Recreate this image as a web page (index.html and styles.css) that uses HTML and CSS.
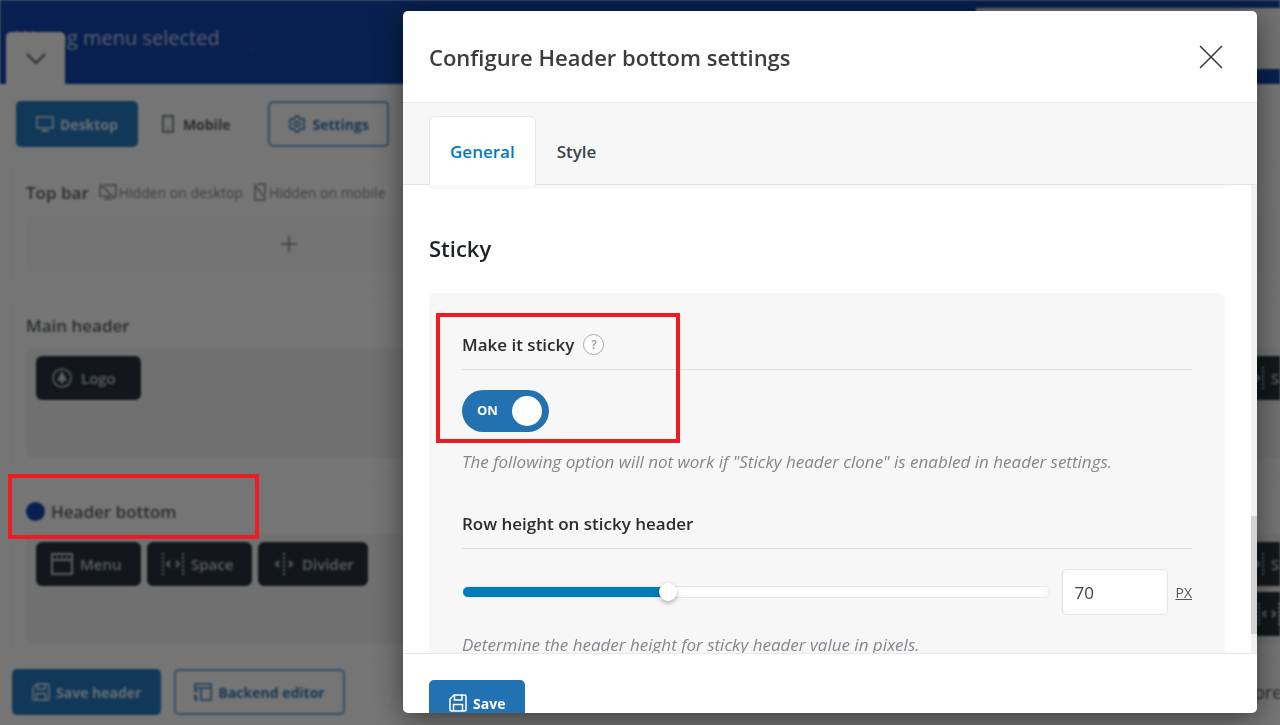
FILE: index.html
```
<!DOCTYPE html>
<html lang="en">
<head>
    <meta charset="UTF-8">
    <meta name="viewport" content="width=device-width, initial-scale=1.0">
    <title>Header builder</title>
    <link rel="stylesheet" href="styles.css">
</head>
<body>
    <!-- shared icons -->
    <svg class="sprite" aria-hidden="true">
        <symbol id="i-save" viewBox="0 0 18 18">
            <path d="M5 1h10.500a1.500 1.500 0 0 1 1.500 1.500v13a1.500 1.500 0 0 1-1.500 1.500h-13A1.500 1.500 0 0 1 1 15.500V5zM5.500 1v5h7.500V1M4.500 17v-6.500h9V17"/>
        </symbol>
        <symbol id="i-space" viewBox="0 0 24 24">
            <path d="M2 1v22M22 1v22" stroke-width="2" stroke-dasharray="2 2"/>
            <path d="M9 9l-3 3 3 3M15 9l3 3-3 3" stroke-width="2"/>
        </symbol>
        <symbol id="i-divider" viewBox="0 0 24 24">
            <path d="M12 1v22" stroke-width="2" stroke-dasharray="2 2"/>
            <path d="M7 9l-3 3 3 3M17 9l3 3-3 3" stroke-width="2"/>
        </symbol>
    </svg>

    <div class="page">
        <header class="site-header">
            <span class="menu-note">Wrong menu selected</span>
            <span class="search-block"></span>
            <button type="button" class="collapse" aria-label="Collapse">
                <svg width="20" height="12" viewBox="0 0 20 12"><path d="M1 1l9 9 9-9"/></svg>
            </button>
        </header>

        <main class="builder">
            <div class="toolbar">
                <div class="switcher">
                    <button type="button" class="btn btn-primary">
                        <svg width="18" height="18" viewBox="0 0 18 18"><path d="M1 2h16v11H1zM9 13v3M5 16h8"/></svg>
                        Desktop
                    </button>
                    <button type="button" class="btn btn-plain">
                        <svg width="18" height="18" viewBox="0 0 18 18"><path d="M4 1h10v16H4zM8 14h2"/></svg>
                        Mobile
                    </button>
                </div>
                <button type="button" class="btn btn-outline">
                    <svg width="18" height="18" viewBox="0 0 18 18"><path d="M7.500 1h3l.7 2.500 1.500.9 2.600-.7 1.500 2.600L15 8.200v1.600l1.800 1.900-1.500 2.600-2.600-.7-1.500.9-.7 2.500h-3l-.7-2.500-1.500-.9-2.600.7-1.500-2.600L3 9.800V8.200L1.200 6.300l1.500-2.600 2.600.7 1.500-.9z"/><circle cx="9" cy="9" r="2.500"/></svg>
                    Settings
                </button>
            </div>

            <section class="panel">
                <div class="panel-head">
                    <h2>Top bar</h2>
                    <span class="hint">
                        <svg width="18" height="18" viewBox="0 0 18 18"><path d="M5 2h12v11h-2M1 3v10h10M5 16h8M9 13v3M1 1l15 15"/></svg>
                        Hidden on desktop
                    </span>
                    <span class="hint">
                        <svg width="14" height="18" viewBox="0 0 14 18"><path d="M4 1h8v10M2 4v13h10M1 1l12 15"/></svg>
                        Hidden on mobile
                    </span>
                </div>
                <div class="drop drop-empty">
                    <button type="button" class="add" aria-label="Add element">
                        <svg width="16" height="16" viewBox="0 0 16 16"><path d="M8 0v16M0 8h16"/></svg>
                    </button>
                </div>
            </section>

            <section class="panel">
                <div class="panel-head">
                    <h2>Main header</h2>
                </div>
                <div class="drop">
                    <div class="chips">
                        <button type="button" class="chip chip-logo">
                            <svg width="20" height="20" viewBox="0 0 20 20"><circle cx="10" cy="10" r="9"/><path class="solid" d="M10 3l5 10H5zM9 13h2v3H9z"/></svg>
                            Logo
                        </button>
                    </div>
                    <div class="chips chips-end">
                        <button type="button" class="chip"><svg width="24" height="24"><use href="#i-space"/></svg>Space</button>
                    </div>
                </div>
            </section>

            <section class="panel">
                <div class="panel-head">
                    <span class="dot"></span>
                    <h2>Header bottom</h2>
                </div>
                <div class="drop">
                    <div class="chips">
                        <button type="button" class="chip">
                            <svg width="24" height="24" viewBox="0 0 24 24"><path d="M2 2h20v20H2zM2 8h20M6 5h2M11 5h2M16 5h2" stroke-width="2"/></svg>
                            Menu
                        </button>
                        <button type="button" class="chip"><svg width="24" height="24"><use href="#i-space"/></svg>Space</button>
                        <button type="button" class="chip"><svg width="24" height="24"><use href="#i-divider"/></svg>Divider</button>
                    </div>
                    <div class="chips chips-end">
                        <button type="button" class="chip"><svg width="24" height="24"><use href="#i-space"/></svg>Space</button>
                        <button type="button" class="chip chip-inset"><svg width="24" height="24"><use href="#i-space"/></svg>Space</button>
                    </div>
                </div>
            </section>

            <div class="actions">
                <button type="button" class="btn btn-primary">
                    <svg width="18" height="18"><use href="#i-save"/></svg>
                    Save header
                </button>
                <button type="button" class="btn btn-outline">
                    <svg width="18" height="18" viewBox="0 0 18 18"><path d="M1 1h16v4H1zM7 5v12h10V5M1 5v3h3M1 11v6h3M1 14h3"/></svg>
                    Backend editor
                </button>
                <a href="#" class="presets">presets</a>
            </div>
        </main>
    </div>

    <div class="overlay">
        <div class="modal" role="dialog" aria-labelledby="modal-title">
            <div class="modal-header">
                <h1 id="modal-title">Configure Header bottom settings</h1>
                <button type="button" class="close" aria-label="Close">
                    <svg width="24" height="24" viewBox="0 0 24 24"><path d="M1 1l22 22M23 1L1 23"/></svg>
                </button>
            </div>

            <div class="tabs">
                <button type="button" class="tab active">General</button>
                <button type="button" class="tab">Style</button>
            </div>

            <div class="modal-body">
                <div class="modal-content">
                    <div class="card card-end"></div>
                    <h2>Sticky</h2>
                    <div class="card">
                        <div class="field">
                            <div class="field-title">
                                <label for="sticky">Make it sticky</label>
                                <button type="button" class="help" aria-label="Help">?</button>
                            </div>
                            <div class="toggle">
                                <input type="checkbox" id="sticky" checked>
                                <span class="toggle-text">ON</span>
                            </div>
                            <p>The following option will not work if "Sticky header clone" is enabled in header settings.</p>
                            <div class="marker marker-field"></div>
                        </div>
                        <div class="field">
                            <div class="field-title">
                                <label for="height">Row height on sticky header</label>
                            </div>
                            <div class="slider-row">
                                <input type="range" class="slider" min="0" max="200" value="69" aria-label="Row height">
                                <input type="text" class="number" id="height" value="70">
                                <a href="#" class="unit">PX</a>
                            </div>
                            <p>Determine the header height for sticky header value in pixels.</p>
                        </div>
                    </div>
                </div>
                <div class="scrollbar"><div class="scroll-thumb"></div></div>
            </div>

            <div class="modal-footer">
                <button type="button" class="btn btn-primary">
                    <svg width="18" height="18"><use href="#i-save"/></svg>
                    Save
                </button>
            </div>
        </div>
    </div>
    <div class="marker marker-row"></div>
</body>
</html>
```
FILE: styles.css
```
* {
    box-sizing: border-box;
}
body {
    margin: 0;
    height: 100vh;
    overflow: hidden;
    font-family: "Open Sans", "Noto Sans", sans-serif;
    font-size: 16px;
    color: #2c3338;
    background: #ebebeb;
}
h1, h2, p {
    margin: 0;
}
button, input {
    font-family: inherit;
}
button {
    cursor: pointer;
}
svg {
    flex: none;
    fill: none;
    stroke: currentColor;
    stroke-width: 1.5;
}
.sprite {
    position: absolute;
    width: 0;
    height: 0;
}

/* page behind the dialog */
.page {
    height: 100vh;
    overflow: hidden;
    background: #ebebeb;
    filter: blur(1px);
}
.site-header {
    position: relative;
    display: flex;
    justify-content: space-between;
    height: 84px;
    padding: 8px 0 15px 16px;
    background: #10409e;
}
.menu-note {
    align-self: flex-start;
    margin-top: 16px;
    padding-right: 32px;
    border-right: 1px solid #2b55a8;
    font-size: 20px;
    line-height: 28px;
    color: #b4c0dc;
}
.search-block {
    width: 304px;
    background: #e4e4e4;
}
.collapse {
    position: absolute;
    left: 6px;
    bottom: 0;
    width: 59px;
    height: 52px;
    padding: 4px 0 0;
    border: 0;
    border-radius: 5px 5px 0 0;
    background: #ebebeb;
    color: #50575e;
}
.collapse svg {
    stroke-width: 2;
}
.builder {
    display: flex;
    flex-direction: column;
    width: calc(100% + 76px);
    padding: 13px 0 0 12px;
}
.toolbar {
    display: flex;
    align-items: center;
    gap: 13px;
    margin-bottom: 13px;
}
.switcher {
    display: flex;
    padding: 3px;
    border: 1px solid #e4e4e4;
    border-radius: 5px;
}
.btn {
    display: inline-flex;
    align-items: center;
    gap: 6px;
    height: 46px;
    padding: 0 18px;
    border: 2px solid #2271b1;
    border-radius: 5px;
    font-size: 14px;
    font-weight: 700;
    white-space: nowrap;
}
.btn-primary {
    background: #2271b1;
    color: #d5dde6;
}
.btn-outline {
    background: transparent;
    border-color: #6c9cc4;
    color: #2f6fa5;
}
.btn-plain {
    padding: 0 19px;
    background: transparent;
    border-color: transparent;
    color: #50575e;
}
.panel {
    margin-bottom: 11px;
    padding: 14px 13px 13px;
    border: 1px solid #e2e2e2;
    border-radius: 5px;
}
.panel-head {
    display: flex;
    align-items: center;
    gap: 6px;
    height: 26px;
    margin-bottom: 10px;
}
.panel-head h2 {
    font-size: 17px;
    font-weight: 600;
    color: #50575e;
}
.hint {
    display: flex;
    align-items: center;
    gap: 2px;
    margin-left: 4px;
    font-size: 14px;
    color: #787c82;
}
.dot {
    width: 19px;
    height: 19px;
    border-radius: 50%;
    background: #10409e;
}
.drop {
    display: flex;
    justify-content: space-between;
    height: 110px;
    padding: 8px 10px;
    border-radius: 6px;
    background: #e1e1e1;
}
.drop-empty {
    height: 57px;
    padding: 0;
    background: #e7e7e7;
}
.add {
    display: flex;
    align-items: center;
    justify-content: center;
    width: 40%;
    border: 0;
    background: transparent;
    color: #787c82;
}
.chips {
    display: flex;
    align-items: flex-start;
    gap: 6px;
}
.chips-end {
    flex-direction: column;
}
.chip {
    display: flex;
    align-items: center;
    gap: 6px;
    min-width: 105px;
    height: 44px;
    padding: 0 14px;
    border: 0;
    border-radius: 6px;
    background: #262f36;
    color: #b9bec3;
    font-size: 15px;
    font-weight: 600;
}
.chip-logo {
    gap: 9px;
    padding: 0 16px;
}
.chip-inset {
    margin: 0 -16px 0 16px;
}
.solid {
    fill: currentColor;
    stroke: none;
}
.actions {
    display: flex;
    align-items: center;
    gap: 13px;
}
.presets {
    margin-left: auto;
    padding-right: 40px;
    font-size: 18px;
    color: #50575e;
    text-decoration: none;
}

/* dialog */
.overlay {
    position: fixed;
    inset: 0;
    display: flex;
    padding: 11px 23px 12px 403px;
    background: rgba(0, 0, 0, 0.5);
}
.modal {
    flex: 1;
    display: flex;
    flex-direction: column;
    overflow: hidden;
    border-radius: 5px;
    background: #fff;
    box-shadow: 0 5px 30px rgba(0, 0, 0, 0.5);
}
.modal-header {
    display: flex;
    align-items: center;
    justify-content: space-between;
    flex: none;
    height: 92px;
    padding: 0 34px 0 26px;
    border-bottom: 1px solid #e8e8e8;
}
.modal-header h1 {
    font-size: 22px;
    font-weight: 600;
    color: #3c3c3c;
}
.close {
    display: flex;
    padding: 0;
    border: 0;
    background: transparent;
    color: #32373c;
}
.tabs {
    display: flex;
    align-items: flex-end;
    flex: none;
    height: 82px;
    padding: 0 26px;
    background: #f7f7f7;
    box-shadow: inset 0 -1px #e3e3e3;
}
.tab {
    height: 69px;
    padding: 0 20px;
    border: 1px solid transparent;
    border-bottom: 0;
    border-radius: 6px 6px 0 0;
    background: transparent;
    font-size: 17px;
    font-weight: 600;
    color: #3c434a;
}
.tab.active {
    background: #fff;
    border-color: #e8e8e8;
    color: #007cba;
}
.modal-body {
    display: flex;
    flex: 1;
    min-height: 0;
    overflow: hidden;
}
.modal-content {
    flex: 1;
    padding: 0 26px;
}
.modal-content h2 {
    margin: 42px 0 28px;
    font-size: 22px;
    line-height: 34px;
    font-weight: 600;
    color: #1d2327;
}
.card {
    padding: 33px;
    border-radius: 6px;
    background: #f7f7f7;
}
.card-end {
    height: 4px;
    padding: 0;
    border-radius: 0 0 6px 6px;
}
.field {
    position: relative;
    margin-bottom: 31px;
}
.field-title {
    display: flex;
    align-items: center;
    gap: 9px;
    height: 44px;
    padding-bottom: 6px;
    margin-bottom: 20px;
    border-bottom: 1px solid #e0e0e0;
    font-size: 17px;
    font-weight: 600;
    color: #2c2c2c;
}
.help {
    width: 21px;
    height: 21px;
    padding: 0;
    border: 1px solid #aaa;
    border-radius: 50%;
    background: #fff;
    font-size: 12px;
    font-weight: 600;
    line-height: 18px;
    color: #999;
}
.toggle {
    position: relative;
    width: 87px;
    height: 42px;
}
.toggle input {
    appearance: none;
    display: flex;
    align-items: center;
    justify-content: flex-end;
    width: 100%;
    height: 100%;
    margin: 0;
    padding: 0 7px;
    border-radius: 21px;
    background: #2271b1;
}
.toggle input::before {
    content: "";
    width: 30px;
    height: 30px;
    border-radius: 50%;
    background: #fff;
}
.toggle-text {
    position: absolute;
    left: 15px;
    top: 0;
    line-height: 40px;
    font-size: 13px;
    font-weight: 700;
    color: #fff;
    pointer-events: none;
}
.field p {
    margin-top: 18px;
    font-size: 17px;
    line-height: 24px;
    font-style: italic;
    color: #82878c;
}
.slider-row {
    display: flex;
    align-items: center;
}
.slider {
    appearance: none;
    flex: 1;
    height: 12px;
    margin: 0 12px 0 0;
    border: 1px solid #e8e8e8;
    border-radius: 6px;
    background: linear-gradient(to right, #007cba 35%, #fff 35%);
}
.slider::-webkit-slider-thumb {
    appearance: none;
    width: 18px;
    height: 18px;
    border-radius: 50%;
    background: #fff;
    box-shadow: 0 2px 5px rgba(0, 0, 0, 0.3);
}
.number {
    width: 106px;
    height: 46px;
    padding: 0 11px;
    border: 1px solid #e3e3e3;
    border-radius: 5px;
    background: #fff;
    font-size: 17px;
    color: #3c434a;
}
.unit {
    margin-left: 7px;
    font-size: 14px;
    color: #50575e;
}
.scrollbar {
    display: flex;
    flex-direction: column;
    justify-content: flex-end;
    width: 6px;
    padding-bottom: 19px;
    background: #f1f1f1;
}
.scroll-thumb {
    height: 118px;
    background: #d3d3d3;
}
.modal-footer {
    flex: none;
    height: 60px;
    padding: 26px 26px 0;
    border-top: 1px solid #e8e8e8;
    overflow: hidden;
}
.modal-footer .btn {
    color: #fff;
}

/* red highlight frames */
.marker {
    position: absolute;
    border: 4px solid #ed1c24;
    pointer-events: none;
}
.marker-field {
    left: -26px;
    top: -13px;
    width: 244px;
    height: 130px;
}
.marker-row {
    left: 8px;
    top: 474px;
    width: 251px;
    height: 65px;
}
```
